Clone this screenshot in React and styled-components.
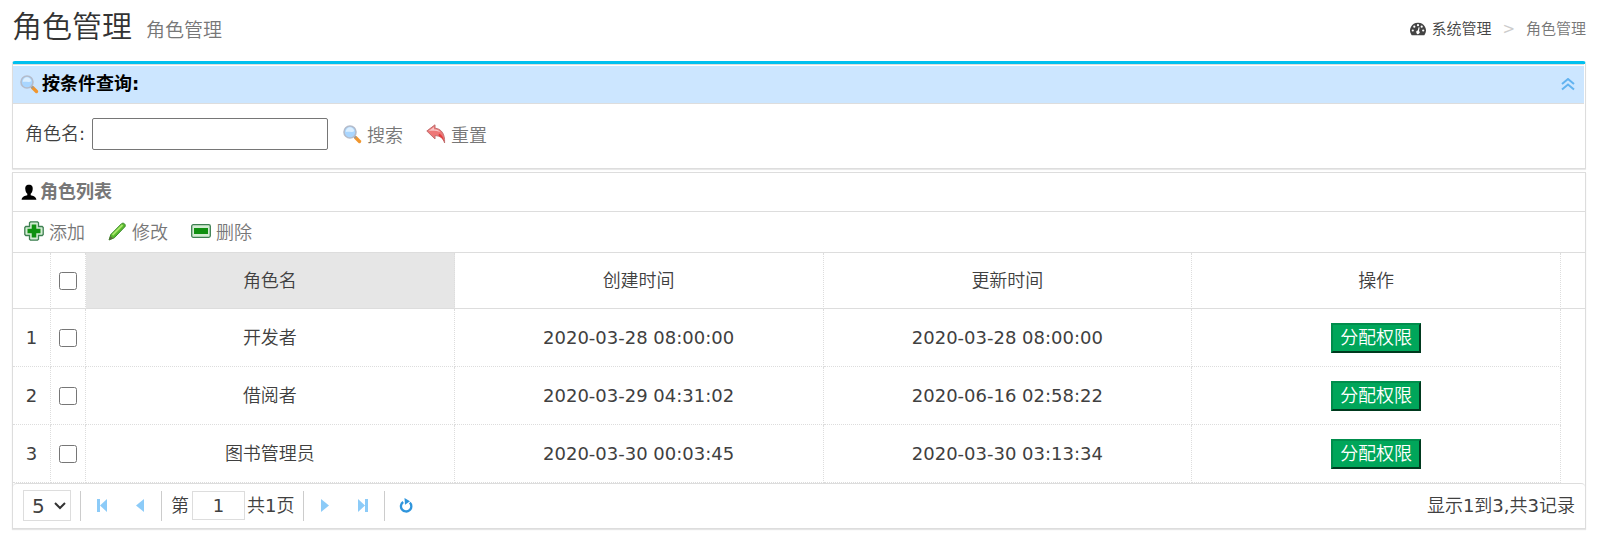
import React, { useState } from 'react'
import styled, { createGlobalStyle, css } from 'styled-components'

const GlobalStyle = createGlobalStyle`
  * {
    box-sizing: border-box;
  }
  body {
    margin: 0;
    background-color: #fff;
    color: #404040;
    font-family: "DejaVu Sans", "Noto Sans CJK SC DemiLight", "Noto Sans CJK SC Light", "Noto Sans CJK SC", sans-serif;
    font-size: 18px;
    line-height: 24px;
    font-weight: 400;
  }
  button, input, select {
    font-family: inherit;
    font-size: inherit;
    font-weight: inherit;
    color: inherit;
  }
`
const Page = styled.div`
  padding: 0 11px 0 12px;
`
const PageHeader = styled.header`
  display: flex;
  align-items: center;
  justify-content: space-between;
  height: 61px;
`
const Heading = styled.h1`
  margin: 0;
  padding-bottom: 4px;
  font-size: 30px;
  line-height: 40px;
  font-weight: 400;
  color: #333;
  small {
    margin-left: 14px;
    font-size: 19px;
    font-weight: 300;
    color: #777;
  }
`
const Breadcrumb = styled.nav`
  display: flex;
  align-items: center;
  padding-bottom: 4px;
  font-size: 15px;
  color: #777;
  a {
    display: flex;
    align-items: center;
    gap: 5px;
    color: #444;
    text-decoration: none;
  }
`
const Arrow = styled.span`
  padding: 0 11px;
  color: #ccc;
`
const Box = styled.section`
  margin-bottom: 3px;
  border: 1px solid #ddd;
  box-shadow: 0 1px 1px rgba(0, 0, 0, 0.1);
  ${({ $info }) => $info && css`
    border-top: 3px solid #00c0ef;
    border-radius: 3px 3px 0 0;
  `}
`
const SearchTitle = styled.div`
  display: flex;
  align-items: center;
  justify-content: space-between;
  height: 40px;
  margin-right: 1px;
  padding: 0 8px 0 7px;
  border-top: 1px solid #ddd;
  border-bottom: 1px solid #ddd;
  box-shadow: inset 0 1px #fff;
  background-color: #cce6ff;
`
const Title = styled.h2`
  display: flex;
  align-items: center;
  gap: 3px;
  margin: 0;
  font-family: "DejaVu Sans", "Noto Sans CJK SC", sans-serif;
  font-size: 18px;
  font-weight: 700;
  color: ${({ $muted }) => ($muted ? '#777' : '#000')};
`
const IconButton = styled.button`
  display: flex;
  align-items: center;
  justify-content: center;
  width: ${({ $width }) => $width || 24}px;
  height: 28px;
  padding: 0;
  border: none;
  background: none;
  cursor: pointer;
`
const SearchForm = styled.form`
  display: flex;
  align-items: center;
  height: 64px;
  padding: 0 12px 4px;
  label {
    margin-right: 7px;
  }
`
const NameInput = styled.input`
  width: 236px;
  height: 32px;
  margin-right: 15px;
  padding: 0 6px;
  border: 1px solid #767676;
  border-radius: 2px;
  outline: none;
`
const LinkButton = styled.button`
  display: flex;
  align-items: center;
  gap: 5px;
  margin-right: 23px;
  padding: 0;
  border: none;
  background: none;
  color: #777;
  cursor: pointer;
`
const ListTitle = styled.div`
  display: flex;
  align-items: center;
  height: 39px;
  padding: 0 8px;
  border-bottom: 1px solid #ddd;
`
const Toolbar = styled.div`
  display: flex;
  align-items: center;
  height: 41px;
  padding: 0 11px 2px;
  border-bottom: 1px solid #ddd;
`
const Table = styled.table`
  width: 100%;
  table-layout: fixed;
  border-collapse: separate;
  border-spacing: 0;
  text-align: center;
  th, td {
    padding: 0;
    font-weight: inherit;
    border-right: 1px dotted #ddd;
  }
  th {
    height: 56px;
    border-bottom: 1px solid #ddd;
  }
  td {
    height: 58px;
    border-bottom: 1px dotted #ddd;
  }
  th:last-child, td:last-child {
    border-right: none;
  }
  td:last-child {
    border-bottom: none;
  }
`
const Col = styled.col`
  width: ${({ $width }) => ($width ? `${$width}px` : 'auto')};
`
const HeadCell = styled.th`
  background-color: ${({ $active }) => ($active ? '#e6e6e6' : 'transparent')};
`
const Checkbox = styled.input`
  display: block;
  width: 18px;
  height: 18px;
  margin: 0 auto;
`
const GrantButton = styled.button`
  height: 30px;
  padding: 0 7px;
  border: 2px outset #008d4c;
  background-color: #00a65a;
  color: #fff;
  line-height: 24px;
  cursor: pointer;
`
const Pager = styled.div`
  display: flex;
  align-items: center;
  justify-content: space-between;
  height: 45px;
  padding: 0 10px 1px;
  border-top: 1px solid #ddd;
  border-radius: 4px 4px 0 0;
`
const PagerControls = styled.div`
  display: flex;
  align-items: center;
`
const PagerButtons = styled.div`
  display: flex;
  gap: 14px;
`
const SelectWrap = styled.div`
  position: relative;
  svg {
    position: absolute;
    top: 12px;
    right: 5px;
    pointer-events: none;
  }
`
const SizeSelect = styled.select`
  display: block;
  appearance: none;
  width: 48px;
  height: 31px;
  padding: 0 0 0 8px;
  border: 1px solid #ddd;
  border-radius: 0;
  background-color: #fff;
  font-size: 20px;
`
const Separator = styled.span`
  width: 1px;
  height: 30px;
  margin: 0 9px;
  background-color: #ccc;
`
const PageInput = styled.input`
  width: 53px;
  height: 29px;
  margin: 0 2px 0 3px;
  padding: 0;
  border: 1px solid #ddd;
  text-align: center;
`

const SearchIcon = () => (
  <svg width="19" height="19" viewBox="0 0 19 19" aria-hidden="true">
    <path d="M12.500 12.500l4 4" stroke="#f0962e" strokeWidth="3.400" strokeLinecap="round" />
    <path d="M11 11l2 2" stroke="#999" strokeWidth="2" />
    <circle cx="7" cy="7" r="6" fill="#a9d6ff" stroke="#b4bccb" strokeWidth="1.600" />
    <path d="M2.800 7a4.200 4.200 0 0 1 8.400-1c-2 2-5.400 0-8.400 1z" fill="#dcefff" />
  </svg>
)

const UndoIcon = () => (
  <svg width="20" height="20" viewBox="0 0 20 20" aria-hidden="true">
    <path d="M.8 7L9 .8v3.400c6 .6 10 5 9.600 14.800-1.400-4.600-4-7.200-9.600-7.400v3.400z" fill="#ee7777" stroke="#c07070" strokeLinejoin="round" />
    <path d="M2.500 7L8 2.900v2.300c3 .2 5 1 6.500 3-4-1.600-8-1.600-12-1.200z" fill="#f8c4c4" />
    <path d="M13 9.500c3 1.500 4.500 4 5 8-1.500-3-3-4.500-5.500-5.500z" fill="#e23c3c" />
  </svg>
)

const UserIcon = () => (
  <svg width="16" height="17" viewBox="0 0 16 17" aria-hidden="true">
    <path d="M8 .8c-3 0-4 2-3.700 4.500.2 2 .9 3.500 2 4.500v1.400C4 12 1 12 .6 15.800h14.800C15 12 12 12 9.700 11.200V9.800c1.100-1 1.800-2.500 2-4.500C12 2.800 11 .8 8 .8z" fill="#000" />
  </svg>
)

const AddIcon = () => (
  <svg width="20" height="20" viewBox="0 0 20 20" aria-hidden="true">
    <path d="M6.500.8h7l1 1v3.700h3.700l1 1v7l-1 1h-3.700v3.700l-1 1h-7l-1-1v-3.700H1.800l-1-1v-7l1-1h3.700V1.800z" fill="#d3ecd3" stroke="#3d7f50" strokeWidth="1.300" />
    <path d="M7.700 3.500h4.600v4.200h4.200v4.600h-4.200v4.200H7.700v-4.200H3.500V7.700h4.200z" fill="#0f9010" />
  </svg>
)

const EditIcon = () => (
  <svg width="19" height="19" viewBox="0 0 19 19" aria-hidden="true">
    <path d="M1 18l1.800-5.500L13.500 1.700c2-1.500 4.500.6 3.600 2.800L6.300 15.800z" fill="#58b82e" stroke="#3c8a2c" />
    <path d="M4.500 13L14.500 3" stroke="#a8e668" strokeWidth="1.800" />
    <path d="M1 18l1.300-4 2.900 2.500z" fill="#5c6b3c" />
  </svg>
)

const RemoveIcon = () => (
  <svg width="20" height="14" viewBox="0 0 20 14" aria-hidden="true">
    <rect x=".7" y=".7" width="18.600" height="12.600" rx="1.500" fill="#d3ecd3" stroke="#3d7f50" strokeWidth="1.300" />
    <rect x="3" y="4" width="14" height="6" fill="#0f9010" />
  </svg>
)

const DashboardIcon = () => (
  <svg width="16" height="14" viewBox="0 0 16 14" aria-hidden="true">
    <path d="M8 .7a7.700 7.700 0 0 0-6.600 12q.3.500.8.500h11.600q.5 0 .8-.5A7.700 7.700 0 0 0 8 .7z" fill="#444" />
    <g fill="#fff">
      <circle cx="2.800" cy="8.500" r="1.100" />
      <circle cx="4.300" cy="4.700" r="1.100" />
      <circle cx="8" cy="3.200" r="1.100" />
      <circle cx="11.700" cy="4.700" r="1.100" />
      <circle cx="13.200" cy="8.500" r="1.100" />
      <path d="M8.600 5.200l1 .3-.6 3.400a1.700 1.700 0 1 1-1.200-.3z" />
    </g>
  </svg>
)

const CollapseIcon = () => (
  <svg width="14" height="13" viewBox="0 0 14 13" fill="none" stroke="#62b3f0" strokeWidth="2" aria-hidden="true">
    <path d="M1 6l6-5 6 5M1 11.500l6-5 6 5" />
  </svg>
)

const ChevronIcon = () => (
  <svg width="12" height="8" viewBox="0 0 12 8" fill="none" stroke="#333" strokeWidth="2" aria-hidden="true">
    <path d="M1 1l5 5 5-5" />
  </svg>
)

const FirstIcon = () => (
  <svg width="12" height="13" viewBox="0 0 12 13" fill="#8ccbf8" aria-hidden="true">
    <path d="M1 0h3v13H1zM11 0v13L4 6.500z" />
  </svg>
)

const PrevIcon = () => (
  <svg width="8" height="13" viewBox="0 0 8 13" fill="#8ccbf8" aria-hidden="true">
    <path d="M8 0v13L0 6.500z" />
  </svg>
)

const NextIcon = () => (
  <svg width="8" height="13" viewBox="0 0 8 13" fill="#8ccbf8" aria-hidden="true">
    <path d="M0 0v13l8-6.500z" />
  </svg>
)

const LastIcon = () => (
  <svg width="12" height="13" viewBox="0 0 12 13" fill="#8ccbf8" aria-hidden="true">
    <path d="M8 0h3v13H8zM1 0v13l7-6.500z" />
  </svg>
)

const RefreshIcon = () => (
  <svg width="14" height="15" viewBox="0 0 14 15" aria-hidden="true">
    <path d="M4.200 4A5.200 5.200 0 1 0 10.800 4.600" fill="none" stroke="#2f95dc" strokeWidth="2.300" />
    <path d="M5.500 0l5.500 3.200-5 3.600z" fill="#2f95dc" />
  </svg>
)

const roles = [
  { id: 1, name: '开发者', created: '2020-03-28 08:00:00', updated: '2020-03-28 08:00:00' },
  { id: 2, name: '借阅者', created: '2020-03-29 04:31:02', updated: '2020-06-16 02:58:22' },
  { id: 3, name: '图书管理员', created: '2020-03-30 00:03:45', updated: '2020-03-30 03:13:34' },
]

export default function App() {
  const [name, setName] = useState('')
  const [selected, setSelected] = useState([])

  const toggle = (id) =>
    setSelected(selected.includes(id) ? selected.filter((s) => s !== id) : [...selected, id])
  const toggleAll = () =>
    setSelected(selected.length === roles.length ? [] : roles.map((r) => r.id))

  return (
    <>
      <GlobalStyle />
      <Page>
        <PageHeader>
          <Heading>角色管理<small>角色管理</small></Heading>
          <Breadcrumb>
            <a href="#system"><DashboardIcon />系统管理</a>
            <Arrow>&gt;</Arrow>
            <span>角色管理</span>
          </Breadcrumb>
        </PageHeader>

        <Box $info>
          <SearchTitle>
            <Title><SearchIcon />按条件查询:</Title>
            <IconButton type="button" $width={16} aria-label="收起"><CollapseIcon /></IconButton>
          </SearchTitle>
          <SearchForm onSubmit={(e) => e.preventDefault()}>
            <label htmlFor="roleName">角色名:</label>
            <NameInput id="roleName" type="text" value={name} onChange={(e) => setName(e.target.value)} />
            <LinkButton type="submit"><SearchIcon />搜索</LinkButton>
            <LinkButton type="button" onClick={() => setName('')}><UndoIcon />重置</LinkButton>
          </SearchForm>
        </Box>

        <Box>
          <ListTitle>
            <Title $muted><UserIcon />角色列表</Title>
          </ListTitle>
          <Toolbar>
            <LinkButton type="button"><AddIcon />添加</LinkButton>
            <LinkButton type="button"><EditIcon />修改</LinkButton>
            <LinkButton type="button"><RemoveIcon />删除</LinkButton>
          </Toolbar>
          <Table>
            <colgroup>
              <Col $width={38} />
              <Col $width={35} />
              <Col />
              <Col />
              <Col />
              <Col />
              <Col $width={24} />
            </colgroup>
            <thead>
              <tr>
                <HeadCell />
                <HeadCell>
                  <Checkbox type="checkbox" aria-label="全选" checked={selected.length === roles.length} onChange={toggleAll} />
                </HeadCell>
                <HeadCell $active>角色名</HeadCell>
                <HeadCell>创建时间</HeadCell>
                <HeadCell>更新时间</HeadCell>
                <HeadCell>操作</HeadCell>
                <HeadCell />
              </tr>
            </thead>
            <tbody>
              {roles.map((role) => (
                <tr key={role.id}>
                  <td>{role.id}</td>
                  <td>
                    <Checkbox type="checkbox" aria-label={role.name} checked={selected.includes(role.id)} onChange={() => toggle(role.id)} />
                  </td>
                  <td>{role.name}</td>
                  <td>{role.created}</td>
                  <td>{role.updated}</td>
                  <td><GrantButton type="button">分配权限</GrantButton></td>
                  <td />
                </tr>
              ))}
            </tbody>
          </Table>
          <Pager>
            <PagerControls>
              <SelectWrap>
                <SizeSelect aria-label="每页条数" defaultValue="5">
                  <option>5</option>
                  <option>10</option>
                  <option>20</option>
                </SizeSelect>
                <ChevronIcon />
              </SelectWrap>
              <Separator />
              <PagerButtons>
                <IconButton type="button" aria-label="首页"><FirstIcon /></IconButton>
                <IconButton type="button" aria-label="上一页"><PrevIcon /></IconButton>
              </PagerButtons>
              <Separator />
              <label htmlFor="pageNo">第</label>
              <PageInput id="pageNo" type="text" defaultValue="1" />
              <span>共1页</span>
              <Separator />
              <PagerButtons>
                <IconButton type="button" aria-label="下一页"><NextIcon /></IconButton>
                <IconButton type="button" aria-label="末页"><LastIcon /></IconButton>
              </PagerButtons>
              <Separator />
              <IconButton type="button" aria-label="刷新"><RefreshIcon /></IconButton>
            </PagerControls>
            <span>显示1到3,共3记录</span>
          </Pager>
        </Box>
      </Page>
    </>
  )
}
